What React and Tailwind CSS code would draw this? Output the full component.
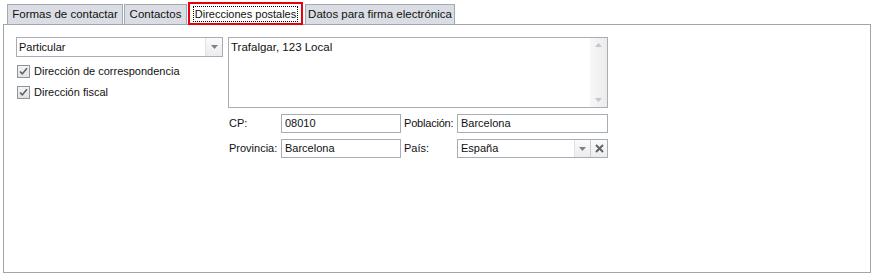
import React from 'react';

// Pestañas del formulario
const TABS = [
  { label: 'Formas de contactar', width: 'w-[116px]' },
  { label: 'Contactos', width: 'w-[63px]' },
  { label: 'Direcciones postales', width: 'w-[115px]', active: true },
  { label: 'Datos para firma electrónica', width: 'w-[150px]' },
];

const ArrowDown = ({ className = '' }) => (
  <svg width="7" height="4" viewBox="0 0 7 4" className={className}>
    <path d="M0 0h7L3.5 4z" fill="currentColor" />
  </svg>
);

const ArrowUp = ({ className = '' }) => (
  <svg width="7" height="4" viewBox="0 0 7 4" className={className}>
    <path d="M0 4h7L3.5 0z" fill="currentColor" />
  </svg>
);

const Check = () => (
  <svg width="9" height="9" viewBox="0 0 9 9">
    <path d="M1 4.5l2.3 2.4L8 1.2" fill="none" stroke="#5b5f66" strokeWidth="1.6" />
  </svg>
);

const Checkbox = ({ label }) => (
  <label className="flex items-center h-[21px] pl-[1px]">
    <span className="w-[13px] h-[13px] border border-[#8f959e] bg-gradient-to-b from-[#f4f4f4] to-[#e2e2e2] flex items-center justify-center">
      <Check />
    </span>
    <span className="ml-[4px]">{label}</span>
  </label>
);

const TextInput = ({ value }) => (
  <div className="h-[19px] border border-[#a7adb6] bg-white flex items-center pl-[3px]">{value}</div>
);

const App = () => {
  return (
    <div
      className="w-[871px] h-[274px] bg-white text-[11px] text-[#111] pt-[2px] pl-[3px] whitespace-nowrap"
      style={{ fontFamily: '"Liberation Sans", Arial, sans-serif' }}
    >
      {/* Pestañas */}
      <div className="flex items-end h-[22px] pl-[4px]">
        {TABS.map((tab) =>
          tab.active ? (
            <div
              key={tab.label}
              className={`${tab.width} h-[23px] -mb-[1px] border-2 border-[#e8000b] bg-white flex items-center justify-center relative z-10 mr-[2px]`}
            >
              <span className="border border-dotted border-black px-[1px] leading-[14px]">{tab.label}</span>
            </div>
          ) : (
            <div
              key={tab.label}
              className={`${tab.width} h-[20px] border border-b-0 border-[#a3a9b2] bg-[#dadee4] flex items-center justify-center mr-[1px] text-[11.5px]`}
            >
              {tab.label}
            </div>
          )
        )}
      </div>

      {/* Panel */}
      <div className="w-[868px] h-[249px] border border-[#a0a6ae] pt-[12px] pl-[12px]">
        <div className="flex gap-[5px]">
          {/* Columna izquierda */}
          <div className="w-[207px]">
            <div className="h-[20px] border border-[#a7adb6] flex">
              <div className="flex-1 flex items-center pl-[2px]">Particular</div>
              <div className="w-[17px] border-l border-[#dfe2e6] bg-gradient-to-b from-[#fafafa] to-[#ececec] flex items-center justify-center text-[#7d828a]">
                <ArrowDown />
              </div>
            </div>
            <div className="mt-[4px]">
              <Checkbox label="Dirección de correspondencia" />
              <Checkbox label="Dirección fiscal" />
            </div>
          </div>

          {/* Columna derecha */}
          <div className="w-[380px]">
            <div className="h-[71px] border border-[#a7adb6] flex">
              <div className="flex-1 pl-[2px] pt-[1px] text-[11.5px]">Trafalgar, 123 Local</div>
              <div className="w-[17px] bg-gradient-to-r from-[#f7f7f7] to-[#ececec] flex flex-col items-center justify-between py-[5px] text-[#c4c7cc]">
                <ArrowUp />
                <ArrowDown />
              </div>
            </div>

            <div className="grid grid-cols-[53px_120px_56px_1fr] gap-y-[6px] mt-[6px] items-center">
              <span className="pl-[1px]">CP:</span>
              <TextInput value="08010" />
              <span className="pl-[3px] tracking-[-0.2px]">Población:</span>
              <TextInput value="Barcelona" />

              <span className="pl-[1px]">Provincia:</span>
              <TextInput value="Barcelona" />
              <span className="pl-[3px]">País:</span>
              <div className="h-[19px] border border-[#a7adb6] flex">
                <div className="flex-1 flex items-center pl-[3px]">España</div>
                <div className="w-[16px] border-l border-[#dfe2e6] bg-gradient-to-b from-[#fafafa] to-[#ececec] flex items-center justify-center text-[#7d828a]">
                  <ArrowDown />
                </div>
                <div className="w-[17px] border-l border-[#c9cdd3] bg-gradient-to-b from-[#fafafa] to-[#ececec] flex items-center justify-center">
                  <svg width="9" height="9" viewBox="0 0 9 9">
                    <path d="M1 1l7 7M8 1L1 8" stroke="#5f646b" strokeWidth="2" />
                  </svg>
                </div>
              </div>
            </div>
          </div>
        </div>
      </div>
    </div>
  );
};

export default App;
